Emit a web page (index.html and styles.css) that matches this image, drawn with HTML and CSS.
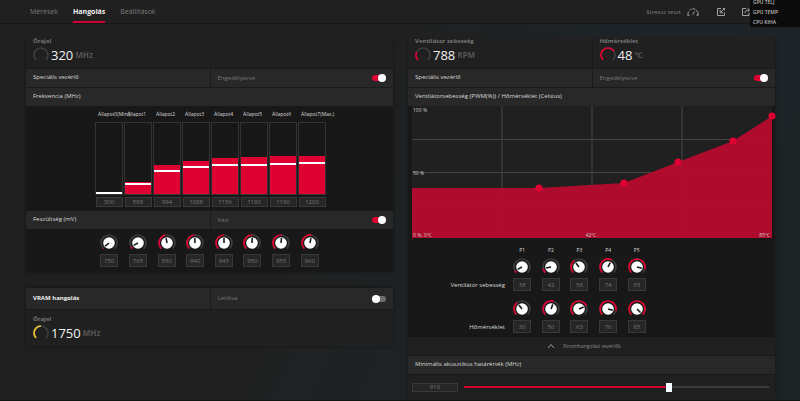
FILE: index.html
```html
<!DOCTYPE html>
<html lang="hu">
<head>
    <meta charset="UTF-8">
    <meta name="viewport" content="width=device-width, initial-scale=1.0">
    <title>Hangolás</title>
    <link rel="stylesheet" href="styles.css">
</head>
<body>
    <!-- Közös rajzok -->
    <svg class="defs" aria-hidden="true">
        <symbol id="knob" viewBox="0 0 18 18">
            <circle class="ring" cx="9" cy="9" r="8" pathLength="100" transform="rotate(135 9 9)"/>
            <circle class="ring-value" cx="9" cy="9" r="8" pathLength="100" transform="rotate(135 9 9)"/>
            <circle class="cap" cx="9" cy="9" r="5.8"/>
            <path class="needle" d="M9 9V4"/>
        </symbol>
        <symbol id="gauge" viewBox="0 0 16 16">
            <circle class="ring" cx="8" cy="8" r="7" pathLength="100" transform="rotate(135 8 8)"/>
            <circle class="ring-value" cx="8" cy="8" r="7" pathLength="100" transform="rotate(135 8 8)"/>
        </symbol>
    </svg>

    <!-- Fejléc -->
    <header class="topbar">
        <nav class="tabs">
            <a href="#meresek">Mérések</a>
            <a href="#hangolas" class="active">Hangolás</a>
            <a href="#beallitasok">Beállítások</a>
        </nav>
        <div class="tools">
            <button class="stress" type="button">
                Stressz teszt
                <svg viewBox="0 0 12 10"><path d="M1 8.5A5.2 5.2 0 0 1 1.6 4.6M2.6 3.2A5.2 5.2 0 0 1 4.6 2M5.6 1.8A5.2 5.2 0 0 1 8.4 2.5M9.4 3.2A5.2 5.2 0 0 1 11 8.5M5.6 7.5L7.6 4.4M.6 8.2h2M9.4 8.2h2"/></svg>
            </button>
            <button type="button" aria-label="Importálás"><svg viewBox="0 0 10 10"><path d="M5 1.5H1.5V8.5H8.5V5.5M8.8 1.2L4.6 5.4M4.2 2.8V5.8H7.2M6.8 1.5h1.7v1.7"/></svg></button>
            <button type="button" aria-label="Exportálás"><svg viewBox="0 0 10 10"><path d="M5 1.5H1.5V8.5H8V6M4 6C4 4 5.4 3 8 3M6.6 1.2L8.6 3L6.6 4.8"/></svg></button>
        </div>
    </header>

    <!-- Teljesítmény kijelző -->
    <div class="overlay">
        <span>GPU TELJ</span>
        <span>GPU TEMP</span>
        <span>CPU KIHA</span>
    </div>

    <main class="columns">
        <div class="column">
            <!-- GPU órajel -->
            <section class="card">
                <div class="readouts">
                    <div class="readout">
                        <h2>Órajel</h2>
                        <p><svg class="gauge" style="--v: 0"><use href="#gauge"/></svg><b>320</b><i>MHz</i></p>
                    </div>
                </div>
                <div class="row split">
                    <label for="gpu-control">Speciális vezérlő</label>
                    <div class="state"><span>Engedélyezve</span><input class="switch" id="gpu-control" type="checkbox" checked></div>
                </div>
                <h3 class="row">Frekvencia (MHz)</h3>
                <div class="well freq">
                    <div class="level">
                        <label for="f0">Állapot0(Min.)</label>
                        <div class="bar"><div class="fill" style="height: 0%"></div><div class="mark" style="bottom: 0%"></div></div>
                        <input id="f0" type="text" value="300">
                    </div>
                    <div class="level">
                        <label for="f1">Állapot1</label>
                        <div class="bar"><div class="fill" style="height: 17%"></div><div class="mark" style="bottom: 13%"></div></div>
                        <input id="f1" type="text" value="588">
                    </div>
                    <div class="level">
                        <label for="f2">Állapot2</label>
                        <div class="bar"><div class="fill" style="height: 41%"></div><div class="mark" style="bottom: 31%"></div></div>
                        <input id="f2" type="text" value="994">
                    </div>
                    <div class="level">
                        <label for="f3">Állapot3</label>
                        <div class="bar"><div class="fill" style="height: 47%"></div><div class="mark" style="bottom: 36%"></div></div>
                        <input id="f3" type="text" value="1088">
                    </div>
                    <div class="level">
                        <label for="f4">Állapot4</label>
                        <div class="bar"><div class="fill" style="height: 51%"></div><div class="mark" style="bottom: 39%"></div></div>
                        <input id="f4" type="text" value="1156">
                    </div>
                    <div class="level">
                        <label for="f5">Állapot5</label>
                        <div class="bar"><div class="fill" style="height: 52%"></div><div class="mark" style="bottom: 40%"></div></div>
                        <input id="f5" type="text" value="1180">
                    </div>
                    <div class="level">
                        <label for="f6">Állapot6</label>
                        <div class="bar"><div class="fill" style="height: 53%"></div><div class="mark" style="bottom: 41%"></div></div>
                        <input id="f6" type="text" value="1190">
                    </div>
                    <div class="level">
                        <label for="f7">Állapot7(Max.)</label>
                        <div class="bar"><div class="fill" style="height: 54%"></div><div class="mark" style="bottom: 42%"></div></div>
                        <input id="f7" type="text" value="1200">
                    </div>
                </div>
                <div class="row split">
                    <label for="voltage">Feszültség (mV)</label>
                    <div class="state"><span>Kézi</span><input class="switch" id="voltage" type="checkbox" checked></div>
                </div>
                <div class="well volts">
                    <div class="dial"><svg class="knob" style="--v: 2"><use href="#knob"/></svg><input type="text" value="750" aria-label="Feszültség 0"></div>
                    <div class="dial"><svg class="knob" style="--v: 6"><use href="#knob"/></svg><input type="text" value="765" aria-label="Feszültség 1"></div>
                    <div class="dial"><svg class="knob" style="--v: 46"><use href="#knob"/></svg><input type="text" value="930" aria-label="Feszültség 2"></div>
                    <div class="dial"><svg class="knob" style="--v: 49"><use href="#knob"/></svg><input type="text" value="940" aria-label="Feszültség 3"></div>
                    <div class="dial"><svg class="knob" style="--v: 50"><use href="#knob"/></svg><input type="text" value="945" aria-label="Feszültség 4"></div>
                    <div class="dial"><svg class="knob" style="--v: 51"><use href="#knob"/></svg><input type="text" value="950" aria-label="Feszültség 5"></div>
                    <div class="dial"><svg class="knob" style="--v: 52"><use href="#knob"/></svg><input type="text" value="955" aria-label="Feszültség 6"></div>
                    <div class="dial"><svg class="knob" style="--v: 54"><use href="#knob"/></svg><input type="text" value="960" aria-label="Feszültség 7"></div>
                </div>
            </section>

            <!-- VRAM -->
            <section class="card">
                <div class="row split tall">
                    <label for="vram">VRAM hangolás</label>
                    <div class="state"><span>Letiltva</span><input class="switch" id="vram" type="checkbox"></div>
                </div>
                <div class="readouts vram">
                    <div class="readout">
                        <h2>Órajel</h2>
                        <p><svg class="gauge memory" style="--v: 50"><use href="#gauge"/></svg><b>1750</b><i>MHz</i></p>
                    </div>
                </div>
            </section>
        </div>

        <div class="column">
            <!-- Ventilátor -->
            <section class="card">
                <div class="readouts">
                    <div class="readout">
                        <h2>Ventilátor sebesség</h2>
                        <p><svg class="gauge" style="--v: 26"><use href="#gauge"/></svg><b>788</b><i>RPM</i></p>
                    </div>
                    <div class="readout">
                        <h2>Hőmérséklet</h2>
                        <p><svg class="gauge" style="--v: 72"><use href="#gauge"/></svg><b>48</b><i>℃</i></p>
                    </div>
                </div>
                <div class="row split">
                    <label for="fan-control">Speciális vezérlő</label>
                    <div class="state"><span>Engedélyezve</span><input class="switch" id="fan-control" type="checkbox" checked></div>
                </div>
                <h3 class="row">Ventilátorsebesség (PWM(%)) / Hőmérséklet (Celsius)</h3>
                <div class="well">
                    <svg class="curve" viewBox="0 0 360 132">
                        <rect class="plot" width="360" height="132"/>
                        <path class="grid-v" d="M90 0V132M180 0V132M270 0V132"/>
                        <path class="grid-h" d="M0 33.5H360M0 66.5H360M0 99.5H360"/>
                        <path class="area" d="M0 82H127L212 77L266 56L321 35L360 10V132H0Z"/>
                        <g class="points">
                            <circle cx="127" cy="82" r="3.6"/>
                            <circle cx="212" cy="77" r="3.6"/>
                            <circle cx="266" cy="56" r="3.6"/>
                            <circle cx="321" cy="35" r="3.6"/>
                            <circle cx="360" cy="10" r="3.6"/>
                        </g>
                        <text x="1" y="6">100 %</text>
                        <text x="1" y="69">50 %</text>
                        <text x="1" y="131">0 %, 0℃</text>
                        <text x="179" y="131" text-anchor="middle">42℃</text>
                        <text x="358" y="131" text-anchor="end">85℃</text>
                    </svg>
                    <div class="fan-grid">
                        <span></span><span>P1</span><span>P2</span><span>P3</span><span>P4</span><span>P5</span>
                        <h4>Ventilátor sebesség</h4>
                        <div class="dial"><svg class="knob" style="--v: 6"><use href="#knob"/></svg><input type="text" value="38" aria-label="Ventilátor sebesség P1"></div>
                        <div class="dial"><svg class="knob" style="--v: 12"><use href="#knob"/></svg><input type="text" value="42" aria-label="Ventilátor sebesség P2"></div>
                        <div class="dial"><svg class="knob" style="--v: 36"><use href="#knob"/></svg><input type="text" value="58" aria-label="Ventilátor sebesség P3"></div>
                        <div class="dial"><svg class="knob" style="--v: 60"><use href="#knob"/></svg><input type="text" value="74" aria-label="Ventilátor sebesség P4"></div>
                        <div class="dial"><svg class="knob" style="--v: 89"><use href="#knob"/></svg><input type="text" value="93" aria-label="Ventilátor sebesség P5"></div>
                        <h4>Hőmérséklet</h4>
                        <div class="dial"><svg class="knob" style="--v: 36"><use href="#knob"/></svg><input type="text" value="30" aria-label="Hőmérséklet P1"></div>
                        <div class="dial"><svg class="knob" style="--v: 58"><use href="#knob"/></svg><input type="text" value="50" aria-label="Hőmérséklet P2"></div>
                        <div class="dial"><svg class="knob" style="--v: 75"><use href="#knob"/></svg><input type="text" value="63" aria-label="Hőmérséklet P3"></div>
                        <div class="dial"><svg class="knob" style="--v: 89"><use href="#knob"/></svg><input type="text" value="76" aria-label="Hőmérséklet P4"></div>
                        <div class="dial"><svg class="knob" style="--v: 100"><use href="#knob"/></svg><input type="text" value="85" aria-label="Hőmérséklet P5"></div>
                    </div>
                </div>
                <button class="fine" type="button">
                    <svg viewBox="0 0 8 6"><path d="M1 5L4 1.5L7 5"/></svg>
                    Finomhangolási vezérlők
                </button>
                <h3 class="row"><label for="acoustic">Minimális akusztikus határérték (MHz)</label></h3>
                <div class="acoustic">
                    <input id="acoustic" type="text" value="910">
                    <input class="slider" type="range" min="0" max="1344" value="910" style="--v: 68%" aria-label="Minimális akusztikus határérték">
                </div>
            </section>
        </div>
    </main>
</body>
</html>
```

FILE: styles.css
```css
* {
    box-sizing: border-box;
}

body {
    margin: 0;
    min-height: 100vh;
    font-family: "Open Sans", "Noto Sans", "Noto Sans CJK SC", sans-serif;
    font-size: 6px;
    line-height: 8px;
    color: #d8d8d8;
    background: linear-gradient(115deg, #202020 40%, #1d2327 65%, #1d2225);
    border-bottom: 1px solid #141414;
    overflow: hidden;
}

h2, h3, h4, p {
    margin: 0;
    font-size: inherit;
    font-weight: 400;
}

button {
    padding: 0;
    border: none;
    background: none;
    font: inherit;
    color: inherit;
    cursor: pointer;
}

svg {
    fill: none;
    flex: none;
}

.defs {
    position: absolute;
    width: 0;
    height: 0;
}

/* Fejléc */
.topbar {
    display: flex;
    justify-content: space-between;
    height: 24px;
    padding: 0 49px 0 30px;
    background: #202020;
    border-bottom: 1px solid #171717;
}

.tabs {
    display: flex;
    gap: 15px;
    font-size: 7px;
    line-height: 23px;
}

.tabs a {
    height: 23px;
    color: #7a7a7a;
    text-decoration: none;
}

.tabs .active {
    color: #f2f2f2;
    font-weight: 700;
    border-bottom: 2px solid #d0022f;
}

.tools {
    display: flex;
    align-items: center;
    gap: 15px;
    color: #808080;
}

.tools button {
    display: flex;
    align-items: center;
    gap: 6px;
}

.tools svg {
    width: 10px;
    height: 10px;
    stroke: #a0a0a0;
    stroke-width: 1;
}

.tools .stress {
    margin-right: 2px;
}

.tools .stress svg {
    width: 12px;
}

.overlay {
    position: absolute;
    top: 0;
    right: 0;
    display: flex;
    flex-direction: column;
    justify-content: flex-end;
    width: 50px;
    height: 27px;
    padding-left: 3px;
    background: #0b0b0b;
    overflow: hidden;
    font-size: 5px;
    line-height: 10px;
    font-weight: 600;
    color: #bbb;
}

/* Kártyák */
.columns {
    display: grid;
    grid-template-columns: 1fr 1fr;
    align-items: start;
    gap: 15px;
    margin-top: 13px;
    padding: 0 25px 0 26px;
    overflow: hidden;
}

.column {
    display: grid;
    gap: 15px;
}

.card {
    background: #202020;
    box-shadow: 0 0 3px #151515;
}

.row {
    height: 19px;
    padding: 0 7px;
    line-height: 17px;
    background: #282828;
    border-top: 1px solid #1a1a1a;
}

.split {
    display: grid;
    grid-template-columns: 1fr 1fr;
}

.tall {
    height: 22px;
    line-height: 21px;
    font-weight: 700;
    color: #f0f0f0;
}

.state {
    display: flex;
    align-items: center;
    justify-content: space-between;
    padding-left: 7px;
    border-left: 1px solid #1a1a1a;
    font-weight: 400;
    color: #777;
}

.switch {
    appearance: none;
    width: 14px;
    height: 6px;
    margin: 0;
    border-radius: 3px;
    background: #707070;
}

.switch::before {
    content: "";
    display: block;
    width: 8px;
    height: 8px;
    margin: -1px 0;
    border-radius: 50%;
    background: #fff;
}

.switch:checked {
    background: #df0032;
}

.switch:checked::before {
    margin-left: 6px;
}

/* Kijelzett értékek */
.readouts {
    display: grid;
    grid-template-columns: 1fr 1fr;
    height: 31px;
}

.readout {
    padding-left: 7px;
}

.readout + .readout {
    border-left: 1px solid #1a1a1a;
}

.readout h2 {
    font-weight: 700;
    color: #777;
}

.readout p {
    display: flex;
    align-items: center;
    gap: 2px;
    line-height: 20px;
}

.readout b {
    font-size: 13px;
    font-weight: 400;
    color: #f0f0f0;
}

.readout i {
    font-size: 8px;
    font-style: normal;
    font-weight: 700;
    color: #555;
}

.vram {
    height: 37px;
    padding-top: 5px;
    border-top: 1px solid #1a1a1a;
}

.gauge {
    width: 16px;
    height: 16px;
}

.ring, .ring-value {
    stroke: #3c3c3c;
    stroke-width: 1.7;
    stroke-dasharray: 75px 100px;
}

.ring-value {
    stroke: var(--ring, #df0032);
    stroke-dasharray: calc(var(--v) * 0.75px) 100px;
}

.memory {
    --ring: #f0c330;
}

/* Szabályzók */
.well {
    background: #181818;
}

input[type="text"] {
    width: 18px;
    height: 13px;
    padding: 0;
    border: 1px solid #383838;
    background: #262626;
    font: inherit;
    color: #777;
    text-align: center;
}

.freq {
    display: grid;
    grid-template-columns: repeat(8, 28px);
    justify-content: center;
    gap: 1px;
    height: 104px;
    padding: 2px 0 0 2px;
}

.level {
    display: grid;
    grid-template-columns: 28px;
    grid-template-rows: 12px 73px 10px;
    justify-items: center;
    row-gap: 2px;
}

.level label {
    justify-self: start;
    padding-left: 3px;
    font-size: 5px;
    line-height: 12px;
    white-space: nowrap;
}

.bar {
    position: relative;
    display: flex;
    align-items: flex-end;
    width: 28px;
    border: 1px solid #333;
}

.fill {
    width: 100%;
    background: #df0032;
}

.mark {
    position: absolute;
    left: 0;
    right: 0;
    height: 2px;
    background: #fff;
}

.level input[type="text"] {
    width: 27px;
    height: 10px;
}

.volts {
    display: grid;
    grid-template-columns: repeat(8, 1fr);
    height: 43px;
    padding: 5px 69px 0;
}

.dial {
    display: flex;
    flex-direction: column;
    align-items: center;
    gap: 2px;
}

.knob {
    width: 18px;
    height: 18px;
}

.cap {
    fill: #fff;
}

.needle {
    stroke: #181818;
    stroke-width: 1.6;
    transform-origin: 9px 9px;
    transform: rotate(calc(var(--v) * 2.7deg - 135deg));
}

/* Ventilátor görbe */
.curve {
    display: block;
    width: calc(100% - 7px);
    margin-left: 4px;
    overflow: visible;
}

.plot {
    fill: #202020;
}

.grid-v {
    stroke: #323232;
    stroke-width: 2;
}

.grid-h {
    stroke: #444;
}

.area {
    fill: #b80a2e;
    fill-opacity: 0.94;
}

.points {
    fill: #df0032;
}

.curve text {
    fill: #ccc;
    font-size: 5px;
}

.fan-grid {
    display: grid;
    grid-template-columns: 100px repeat(5, 1fr);
    grid-template-rows: 13px 42px 33px;
    width: 243px;
    padding: 7px 0 4px;
    text-align: center;
}

.fan-grid > span {
    font-size: 5px;
    line-height: 10px;
}

.fan-grid h4 {
    padding: 23px 3px 0 0;
    text-align: right;
}

.fine {
    display: flex;
    align-items: center;
    justify-content: center;
    gap: 8px;
    width: 100%;
    height: 18px;
    padding-right: 15px;
    font-size: 5px;
    color: #888;
}

.fine svg {
    width: 8px;
    height: 6px;
    stroke: #999;
}

.acoustic {
    display: flex;
    align-items: center;
    gap: 6px;
    height: 25px;
    padding: 0 6px 0 4px;
    border-top: 1px solid #1a1a1a;
}

.acoustic input[type="text"] {
    width: 46px;
    height: 9px;
}

.slider {
    appearance: none;
    flex: 1;
    height: 9px;
    margin: 0;
    background: linear-gradient(#d0022f, #d0022f) left / var(--v) 2px no-repeat,
        linear-gradient(#3c3c3c, #3c3c3c) center / 100% 2px no-repeat;
}

.slider::-webkit-slider-thumb {
    appearance: none;
    width: 6px;
    height: 9px;
    background: #fff;
}
```
